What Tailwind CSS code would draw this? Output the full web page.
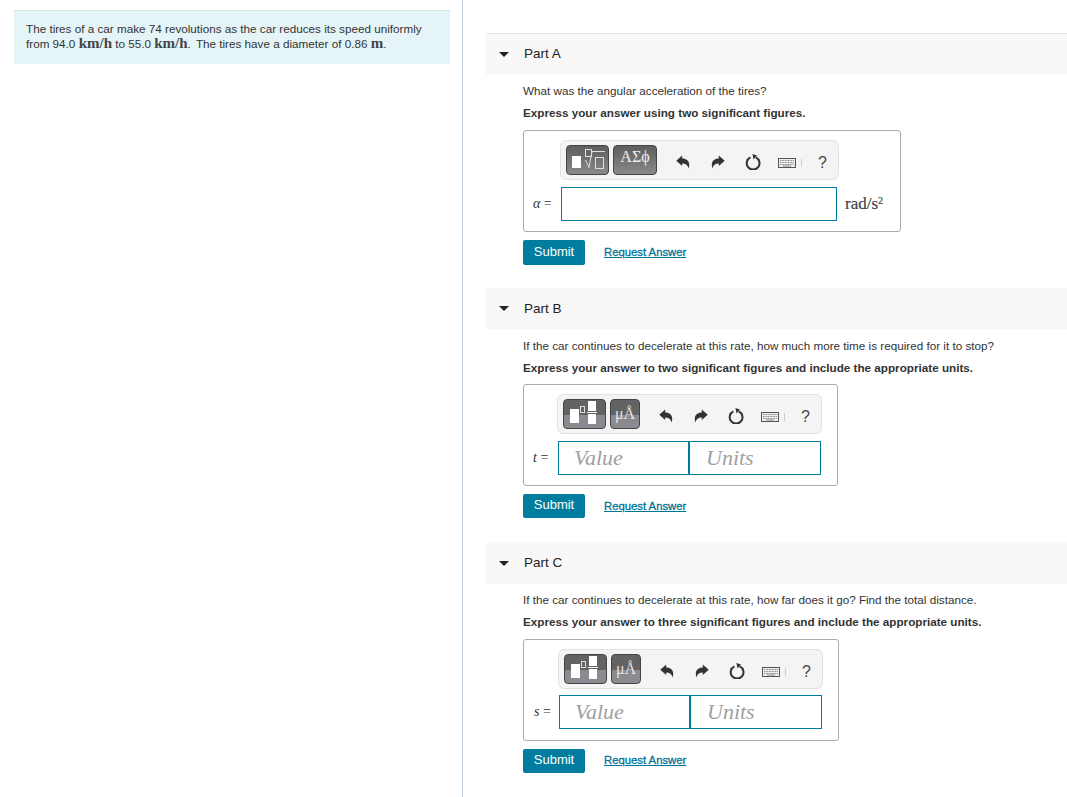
<!DOCTYPE html>
<html lang="en">
<head>
  <meta charset="UTF-8" />
  <title>Tire Problem</title>
  <script src="https://cdn.jsdelivr.net/npm/@tailwindcss/browser@4"></script>
</head>
<body class="bg-white font-['Liberation_Sans',Arial,sans-serif] text-[11.7px] text-[#333]">
  <svg class="hidden">
    <symbol id="undo" viewBox="0 0 14 14"><path d="M0.3 5.8 L6.2 0.6 V3.4 C11.5 3.4 14.6 7 12.6 13.4 C11.8 10.2 9.8 8.4 6.2 8.4 V11 Z" fill="#333"/></symbol>
    <symbol id="redo" viewBox="0 0 14 14"><path d="M13.7 5.8 L7.8 0.6 V3.4 C2.5 3.4 -0.6 7 1.4 13.4 C2.2 10.2 4.2 8.4 7.8 8.4 V11 Z" fill="#333"/></symbol>
    <symbol id="reset" viewBox="0 0 16 16"><path d="M5.4 3.4 A6.4 6.4 0 1 0 10.8 3.4" fill="none" stroke="#333" stroke-width="2"/><path d="M7.4 0 L12 1.4 L8.6 5.4 Z" fill="#333"/></symbol>
    <symbol id="keys" viewBox="0 0 18 10"><rect x="0.5" y="0.5" width="17" height="9" fill="#eee" stroke="#555"/><path d="M2 2.5H16M2 4.5H16M2 6.5H16" stroke="#888" stroke-dasharray="1 .6"/><path d="M5 8H13" stroke="#888"/></symbol>
  </svg>

  <div class="flex h-[797px] overflow-hidden">
    <!-- Problem statement -->
    <div class="w-[463px] shrink-0 border-r border-[#c3d1de] pl-[14px] pr-[12px] pt-[10px]">
      <div class="h-[54px] border-t border-[#d9e3e8] bg-[#e5f5f7] pl-[12px] pt-[10px] leading-[15px]">
        <p>The tires of a car make 74 revolutions as the car reduces its speed uniformly<br />from 94.0 <span class="font-['Liberation_Serif',serif] text-[15px] font-bold text-[#444]">km/h</span> to 55.0 <span class="font-['Liberation_Serif',serif] text-[15px] font-bold text-[#444]">km/h</span><span class="mr-[2px]">.</span> The tires have a diameter of 0.86 <span class="font-['Liberation_Serif',serif] text-[15px] font-bold text-[#444]">m</span>.</p>
      </div>
    </div>

    <!-- Parts -->
    <div class="flex-1 pl-[23px] pt-[33px]">
      <!-- Part A -->
      <div class="flex h-[42px] items-center border-t border-[#dfe3e6] bg-[#f8f8f8] pl-[13px]">
        <span class="h-0 w-0 border-x-[5px] border-t-[5px] border-x-transparent border-t-[#222]"></span>
        <span class="mb-px ml-[15px] text-[13.5px] text-[#222]">Part A</span>
      </div>
      <div class="pl-[37px]">
        <p class="mt-[8px] leading-4">What was the angular acceleration of the tires?</p>
        <p class="mt-[6px] font-bold leading-4">Express your answer using two significant figures.</p>
        <div class="mt-[9px] h-[102px] w-[378px] rounded-[3px] border border-[#aaa] pl-[36px] pt-[9px]">
          <div class="flex h-10 w-[279px] items-center rounded-[6px] border border-[#e2e2e2] bg-[#f4f4f4] pl-[5px]">
            <div class="flex h-[30px] w-[43px] items-center rounded-[4px] border border-[#444] bg-gradient-to-b from-[#5e5e5e] to-[#8a8a8a] pl-[5px]">
              <span class="mt-[4px] h-[12px] w-[9px] bg-white"></span>
              <svg class="ml-[3px]" width="22" height="22" viewBox="0 0 22 22" fill="none" stroke="#ddd"><rect x="1.5" y="0.5" width="6" height="7"/><path d="M1.5 11 L5 18.5 L8 2.5 H21"/><rect x="11.5" y="8.5" width="8" height="11"/></svg>
            </div>
            <div class="ml-[4px] flex h-[30px] w-[44px] items-start justify-center rounded-[4px] border border-[#444] bg-gradient-to-b from-[#5e5e5e] to-[#8a8a8a] pt-[3px] font-['Liberation_Serif',serif] text-[16px] leading-4 text-[#eee]">ΑΣϕ</div>
            <svg class="ml-[19px] mt-[4px]" width="14" height="14"><use href="#undo" /></svg>
            <svg class="ml-[21px] mt-[4px]" width="14" height="14"><use href="#redo" /></svg>
            <svg class="ml-[20px] mt-[4px]" width="16" height="16"><use href="#reset" /></svg>
            <svg class="ml-[17px] mt-[5px]" width="18" height="10"><use href="#keys" /></svg>
            <span class="ml-[5px] mt-[5px] h-[8px] w-px bg-[#ccc]"></span>
            <span class="ml-[16px] mt-[6px] text-[16px] text-[#444]">?</span>
          </div>
          <div class="-ml-[27px] mt-[7px] flex items-center">
            <span class="w-[28px] font-['Liberation_Serif',serif] text-[14px] leading-4"><i>α</i> =</span>
            <div class="h-[34px] w-[276px] border border-[#007d9e] bg-white"></div>
            <span class="ml-[8px] font-['Liberation_Serif',serif] text-[17px] text-[#444] [-webkit-text-stroke:0.2px_#444]">rad/s<sup class="text-[10px]">2</sup></span>
          </div>
        </div>
        <div class="mt-[8px] flex h-[25px] items-center">
          <button class="h-[25px] w-[62px] rounded-[2px] bg-[#007c9e] pb-[2px] text-[13px] text-white">Submit</button>
          <a class="mb-px ml-[19px] text-[11.3px] text-[#00749a] underline [-webkit-text-stroke:0.3px_#00749a]">Request Answer</a>
        </div>
      </div>

      <!-- Part B -->
      <div class="mt-[23px] flex h-[41px] items-center bg-[#f8f8f8] pl-[13px]">
        <span class="h-0 w-0 border-x-[5px] border-t-[5px] border-x-transparent border-t-[#222]"></span>
        <span class="ml-[15px] mt-[2px] text-[13.5px] text-[#222]">Part B</span>
      </div>
      <div class="pl-[37px]">
        <p class="mt-[9px] leading-4">If the car continues to decelerate at this rate, how much more time is required for it to stop?</p>
        <p class="mt-[6px] font-bold leading-4">Express your answer to two significant figures and include the appropriate units.</p>
        <div class="mt-[8px] h-[102px] w-[315px] rounded-[3px] border border-[#aaa] pl-[33px] pt-[9px]">
          <div class="flex h-10 w-[265px] items-center rounded-[6px] border border-[#e2e2e2] bg-[#f4f4f4] pl-[5px]">
            <div class="flex h-[30px] w-[43px] items-center overflow-hidden rounded-[4px] border border-[#444] bg-[linear-gradient(#636363_55%,#8a8a90_55%)] pl-[6px]">
              <span class="mt-[3px] h-[14px] w-[9px] bg-white"></span>
              <span class="mb-[10px] ml-[1px] h-[7px] w-[5px] border border-[#ddd]"></span>
              <div class="mb-[3px] ml-[2px] flex flex-col items-center gap-px">
                <span class="h-[10px] w-[8px] bg-white"></span>
                <span class="h-px w-[10px] bg-white"></span>
                <span class="h-[10px] w-[8px] bg-white"></span>
              </div>
            </div>
            <div class="ml-[4px] flex h-[30px] w-[30px] items-end justify-center rounded-[4px] border border-[#444] bg-[linear-gradient(#636363_55%,#8a8a90_55%)] pb-[6px] font-['Liberation_Serif',serif] text-[16px] leading-4 text-[#e4e4e4]">μÅ</div>
            <svg class="ml-[19px] mt-[4px]" width="14" height="14"><use href="#undo" /></svg>
            <svg class="ml-[21px] mt-[4px]" width="14" height="14"><use href="#redo" /></svg>
            <svg class="ml-[20px] mt-[4px]" width="16" height="16"><use href="#reset" /></svg>
            <svg class="ml-[17px] mt-[5px]" width="18" height="10"><use href="#keys" /></svg>
            <span class="ml-[5px] mt-[5px] h-[8px] w-px bg-[#ccc]"></span>
            <span class="ml-[16px] mt-[6px] text-[16px] text-[#444]">?</span>
          </div>
          <div class="-ml-[24px] mt-[7px] flex items-center">
            <span class="w-[25px] font-['Liberation_Serif',serif] text-[14px] leading-4"><i>t</i> =</span>
            <div class="flex h-[34px] w-[131px] items-center border border-[#007d9e] pb-[2px] pl-[15px] font-['Liberation_Serif',serif] text-[22px] italic text-[#a0a0a0]">Value</div>
            <div class="flex h-[34px] w-[132px] items-center border border-[#007d9e] pb-[2px] pl-[16px] font-['Liberation_Serif',serif] text-[22px] italic text-[#a0a0a0]">Units</div>
          </div>
        </div>
        <div class="mt-[8px] flex h-[24px] items-center">
          <button class="h-[24px] w-[62px] rounded-[2px] bg-[#007c9e] pb-[2px] text-[13px] text-white">Submit</button>
          <a class="ml-[19px] text-[11.3px] text-[#00749a] underline [-webkit-text-stroke:0.3px_#00749a]">Request Answer</a>
        </div>
      </div>

      <!-- Part C -->
      <div class="mt-[24px] flex h-[42px] items-center bg-[#f8f8f8] pl-[13px]">
        <span class="h-0 w-0 border-x-[5px] border-t-[5px] border-x-transparent border-t-[#222]"></span>
        <span class="ml-[15px] text-[13.5px] text-[#222]">Part C</span>
      </div>
      <div class="pl-[37px]">
        <p class="mt-[8px] leading-4">If the car continues to decelerate at this rate, how far does it go? Find the total distance.</p>
        <p class="mt-[6px] font-bold leading-4">Express your answer to three significant figures and include the appropriate units.</p>
        <div class="mt-[9px] h-[102px] w-[316px] rounded-[3px] border border-[#aaa] pl-[34px] pt-[9px]">
          <div class="flex h-10 w-[265px] items-center rounded-[6px] border border-[#e2e2e2] bg-[#f4f4f4] pl-[5px]">
            <div class="flex h-[30px] w-[43px] items-center overflow-hidden rounded-[4px] border border-[#444] bg-[linear-gradient(#636363_55%,#8a8a90_55%)] pl-[6px]">
              <span class="mt-[3px] h-[14px] w-[9px] bg-white"></span>
              <span class="mb-[10px] ml-[1px] h-[7px] w-[5px] border border-[#ddd]"></span>
              <div class="mb-[3px] ml-[2px] flex flex-col items-center gap-px">
                <span class="h-[10px] w-[8px] bg-white"></span>
                <span class="h-px w-[10px] bg-white"></span>
                <span class="h-[10px] w-[8px] bg-white"></span>
              </div>
            </div>
            <div class="ml-[4px] flex h-[30px] w-[30px] items-end justify-center rounded-[4px] border border-[#444] bg-[linear-gradient(#636363_55%,#8a8a90_55%)] pb-[6px] font-['Liberation_Serif',serif] text-[16px] leading-4 text-[#e4e4e4]">μÅ</div>
            <svg class="ml-[19px] mt-[4px]" width="14" height="14"><use href="#undo" /></svg>
            <svg class="ml-[21px] mt-[4px]" width="14" height="14"><use href="#redo" /></svg>
            <svg class="ml-[20px] mt-[4px]" width="16" height="16"><use href="#reset" /></svg>
            <svg class="ml-[17px] mt-[5px]" width="18" height="10"><use href="#keys" /></svg>
            <span class="ml-[5px] mt-[5px] h-[8px] w-px bg-[#ccc]"></span>
            <span class="ml-[16px] mt-[6px] text-[16px] text-[#444]">?</span>
          </div>
          <div class="-ml-[24px] mt-[6px] flex items-center">
            <span class="w-[25px] font-['Liberation_Serif',serif] text-[14px] leading-4"><i>s</i> =</span>
            <div class="flex h-[34px] w-[131px] items-center border border-[#007d9e] pb-[2px] pl-[15px] font-['Liberation_Serif',serif] text-[22px] italic text-[#a0a0a0]">Value</div>
            <div class="flex h-[34px] w-[132px] items-center border border-[#007d9e] pb-[2px] pl-[16px] font-['Liberation_Serif',serif] text-[22px] italic text-[#a0a0a0]">Units</div>
          </div>
        </div>
        <div class="mt-[8px] flex h-[24px] items-center">
          <button class="h-[24px] w-[62px] rounded-[2px] bg-[#007c9e] pb-[2px] text-[13px] text-white">Submit</button>
          <a class="mb-px ml-[19px] text-[11.3px] text-[#00749a] underline [-webkit-text-stroke:0.3px_#00749a]">Request Answer</a>
        </div>
      </div>
    </div>
  </div>
</body>
</html>
